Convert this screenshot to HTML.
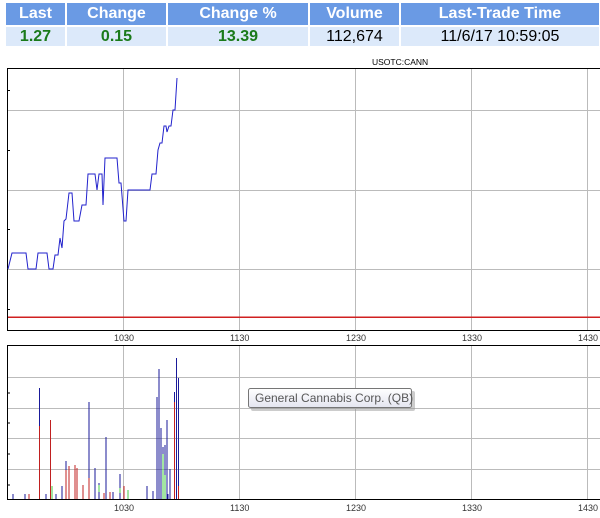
<!DOCTYPE html>
<html><head><style>
body{margin:0;width:600px;height:518px;background:#fff;overflow:hidden;font-family:"Liberation Sans",Arial,sans-serif}
table{position:absolute;left:6px;top:3px;border-collapse:separate;border-spacing:2px 2px;margin:-2px}
td{text-align:center;padding:0;font-size:16px}
.h td{background:#6a9ae4;color:#fff;font-weight:bold;height:22px}
.d td{background:#dce9fa;height:19px;font-size:16px}
.g{color:#1a7a1a;font-weight:bold}
</style></head><body>
<table>
<tr class="h"><td style="width:59px">Last</td><td style="width:99px">Change</td><td style="width:140px">Change %</td><td style="width:89px">Volume</td><td style="width:198px">Last-Trade Time</td></tr>
<tr class="d"><td class="g">1.27</td><td class="g">0.15</td><td class="g">13.39</td><td>112,674</td><td>11/6/17 10:59:05</td></tr>
</table>
<svg width="600" height="518" style="position:absolute;left:0;top:0" font-family="Liberation Sans,Arial,sans-serif" font-size="9">
<text x="372" y="65" font-size="8.5">USOTC:CANN</text>
<g stroke="#bbb" stroke-width="1">
<line x1="123.5" y1="68" x2="123.5" y2="330"/><line x1="239.5" y1="68" x2="239.5" y2="330"/><line x1="355.5" y1="68" x2="355.5" y2="330"/><line x1="471.5" y1="68" x2="471.5" y2="330"/><line x1="587.5" y1="68" x2="587.5" y2="330"/>
<line x1="7" y1="110.5" x2="600" y2="110.5"/><line x1="7" y1="190.5" x2="600" y2="190.5"/><line x1="7" y1="269.5" x2="600" y2="269.5"/>
<line x1="123.5" y1="345" x2="123.5" y2="500"/><line x1="239.5" y1="345" x2="239.5" y2="500"/><line x1="355.5" y1="345" x2="355.5" y2="500"/><line x1="471.5" y1="345" x2="471.5" y2="500"/><line x1="587.5" y1="345" x2="587.5" y2="500"/>
<line x1="7" y1="377.5" x2="600" y2="377.5"/><line x1="7" y1="408.5" x2="600" y2="408.5"/><line x1="7" y1="438.5" x2="600" y2="438.5"/><line x1="7" y1="469.5" x2="600" y2="469.5"/>
</g>
<line x1="7" y1="317" x2="600" y2="317" stroke="#d02020" stroke-width="1.5" shape-rendering="crispEdges"/>
<path d="M7.5 68V330M7 68.5H600M7 330.5H600M7.5 345V500M7 345.5H600M7 499.5H600" stroke="#000" fill="none"/>
<path d="M7 150.5h3M7 229.5h3M7 309.5h3M7 90.5h3M7 393h3M7 423h3M7 454h3M7 485h3" stroke="#000"/>
<polyline fill="none" stroke="#2222cc" stroke-width="1" points="8,269 12,253 26,253 28,269 36,269 38,253 47,253 49,269 53,269 55,255 58,255 60,238 62,248 64,221 66,219 69,193 72,193 74,221 79,221 82,205 86,205 88,174 95,174 97,190 99,174 102,174 103,205 105,158 117,158 119,183 121,183 124,221 126,221 128,190 150,190 152,174 156,174 158,150 160,143 162,143 164,126 166,126 167,132 169,126 171,126 173,110 175,110 177,78"/>
<g fill="#333" font-size="9"><text x="114" y="341">1030</text><text x="230" y="341">1130</text><text x="346" y="341">1230</text><text x="462" y="341">1330</text><text x="578" y="341">1430</text>
<text x="114" y="511">1030</text><text x="230" y="511">1130</text><text x="346" y="511">1230</text><text x="462" y="511">1330</text><text x="578" y="511">1430</text></g>
<g stroke-width="1.3" shape-rendering="crispEdges">
<g stroke="#1a1a99">
<line x1="13" y1="494" x2="13" y2="499"/><line x1="25" y1="494" x2="25" y2="499"/><line x1="39.5" y1="388" x2="39.5" y2="426"/><line x1="46" y1="494" x2="46" y2="499"/><line x1="56" y1="494" x2="56" y2="499"/><line x1="62" y1="486" x2="62" y2="499"/><line x1="66" y1="461" x2="66" y2="470"/><line x1="89" y1="402" x2="89" y2="478"/><line x1="95" y1="468" x2="95" y2="499"/><line x1="99" y1="483" x2="99" y2="499"/><line x1="106" y1="437" x2="106" y2="499"/><line x1="113" y1="492" x2="113" y2="499"/><line x1="120" y1="474" x2="120" y2="499"/><line x1="147" y1="486" x2="147" y2="499"/><line x1="153" y1="491" x2="153" y2="499"/>
<line x1="157" y1="397" x2="157" y2="499"/><line x1="159" y1="369" x2="159" y2="499"/><line x1="161" y1="428" x2="161" y2="499"/><line x1="163" y1="447" x2="163" y2="499"/><line x1="165" y1="445" x2="165" y2="499"/><line x1="167" y1="420" x2="167" y2="499"/><line x1="168" y1="494" x2="168" y2="499"/><line x1="170" y1="469" x2="170" y2="499"/><line x1="174.5" y1="392" x2="174.5" y2="402"/><line x1="176.5" y1="358" x2="176.5" y2="499"/><line x1="178.5" y1="378" x2="178.5" y2="486"/>
</g>
<g stroke="#c02020">
<line x1="39.5" y1="426" x2="39.5" y2="499"/><line x1="50.5" y1="420" x2="50.5" y2="499"/><line x1="29" y1="494" x2="29" y2="499"/><line x1="66" y1="470" x2="66" y2="499"/><line x1="69" y1="466" x2="69" y2="499"/><line x1="75" y1="465" x2="75" y2="499"/><line x1="77" y1="468" x2="77" y2="499"/><line x1="83" y1="485" x2="83" y2="499"/><line x1="89" y1="478" x2="89" y2="499"/><line x1="104" y1="493" x2="104" y2="499"/><line x1="110" y1="492" x2="110" y2="499"/><line x1="124" y1="486" x2="124" y2="499"/><line x1="174.5" y1="402" x2="174.5" y2="499"/><line x1="178.5" y1="486" x2="178.5" y2="499"/>
</g>
<g stroke="#44cc44">
<line x1="52" y1="486" x2="52" y2="499"/><line x1="99" y1="485" x2="99" y2="492"/><line x1="120" y1="488" x2="120" y2="493"/><line x1="128" y1="490" x2="128" y2="499"/><line x1="163" y1="454" x2="163" y2="499"/><line x1="165" y1="475" x2="165" y2="499"/>
</g>
</g>
<defs><linearGradient id="tg" x1="0" y1="0" x2="0" y2="1"><stop offset="0" stop-color="#fff"/><stop offset="1" stop-color="#e4e5f0"/></linearGradient></defs>
<rect x="251" y="391" width="164" height="20" rx="2" fill="#999" opacity="0.5"/>
<rect x="248.5" y="388.5" width="163" height="19" rx="2" fill="url(#tg)" stroke="#767676"/>
<text x="255" y="402" font-size="12" fill="#575757">General Cannabis Corp. (QB)</text>
</svg>
</body></html>
